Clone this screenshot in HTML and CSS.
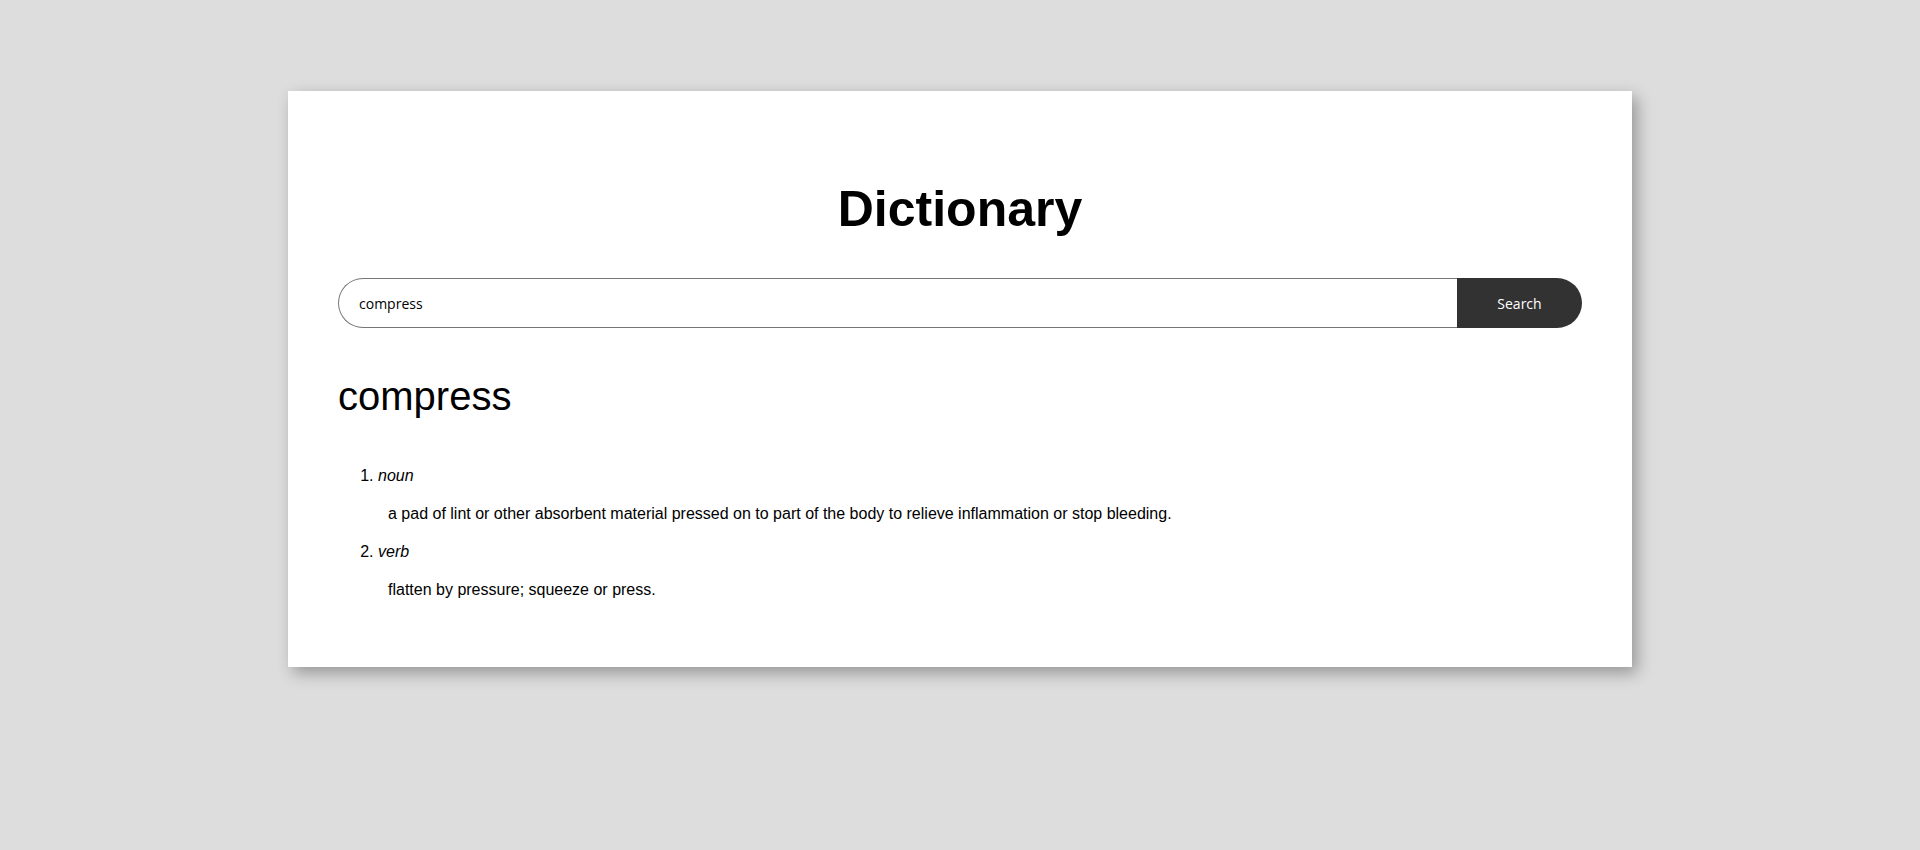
FILE: index.html
```html
<!DOCTYPE html>
<html lang="en">
<head>
<meta charset="utf-8">
<title>Dictionary</title>
<link rel="stylesheet" href="styles.css">
</head>
<body>
<main class="card">
  <h1 class="title">Dictionary</h1>
  <form class="search">
    <input class="search-input" type="text" value="compress">
    <button class="search-btn" type="button">Search</button>
  </form>
  <h2 class="word">compress</h2>
  <ol class="meanings">
    <li class="meaning">
      <i class="pos">noun</i>
      <p class="def">a pad of lint or other absorbent material pressed on to part of the body to relieve inflammation or stop bleeding.</p>
    </li>
    <li class="meaning">
      <i class="pos">verb</i>
      <p class="def">flatten by pressure; squeeze or press.</p>
    </li>
  </ol>
</main>
</body>
</html>
```
FILE: styles.css
```css
html, body {
  margin: 0;
  padding: 0;
}
body {
  box-sizing: border-box;
  min-height: 100vh;
  padding-top: 91px;
  background: #dddddd;
  font-family: "Liberation Sans", Arial, sans-serif;
  color: #000;
}
.card {
  box-sizing: border-box;
  width: 1344px;
  margin: 0 auto;
  padding: 50px 50px 48px;
  background: #fff;
  box-shadow: 5px 6px 15px rgba(0, 0, 0, 0.32);
}
.title {
  margin: 40px 0 40px;
  font-size: 50px;
  line-height: 57px;
  font-weight: bold;
  text-align: center;
}
.search {
  display: flex;
  height: 50px;
  margin: 0;
}
.search-input {
  flex: 1;
  box-sizing: border-box;
  height: 50px;
  margin: 0;
  padding: 0 20px;
  border: 1px solid #767676;
  border-right: none;
  border-radius: 25px 0 0 25px;
  font-family: "Open Sans", sans-serif;
  font-size: 14px;
  color: #000;
  outline: none;
  background: #fff;
}
.search-btn {
  width: 125px;
  height: 50px;
  margin: 0;
  padding: 0;
  border: none;
  border-radius: 0 25px 25px 0;
  background: #323232;
  color: #fff;
  font-family: "Open Sans", sans-serif;
  font-size: 14px;
  cursor: pointer;
}
.word {
  margin: 45px 0 48px;
  font-size: 40px;
  line-height: 46px;
  font-weight: normal;
}
.meanings {
  margin: 0;
  padding-left: 40px;
  font-size: 16px;
  line-height: 18px;
}
.meaning {
  margin: 0;
}
.pos {
  font-style: italic;
}
.def {
  margin: 20px 0 20px 10px;
}
```
